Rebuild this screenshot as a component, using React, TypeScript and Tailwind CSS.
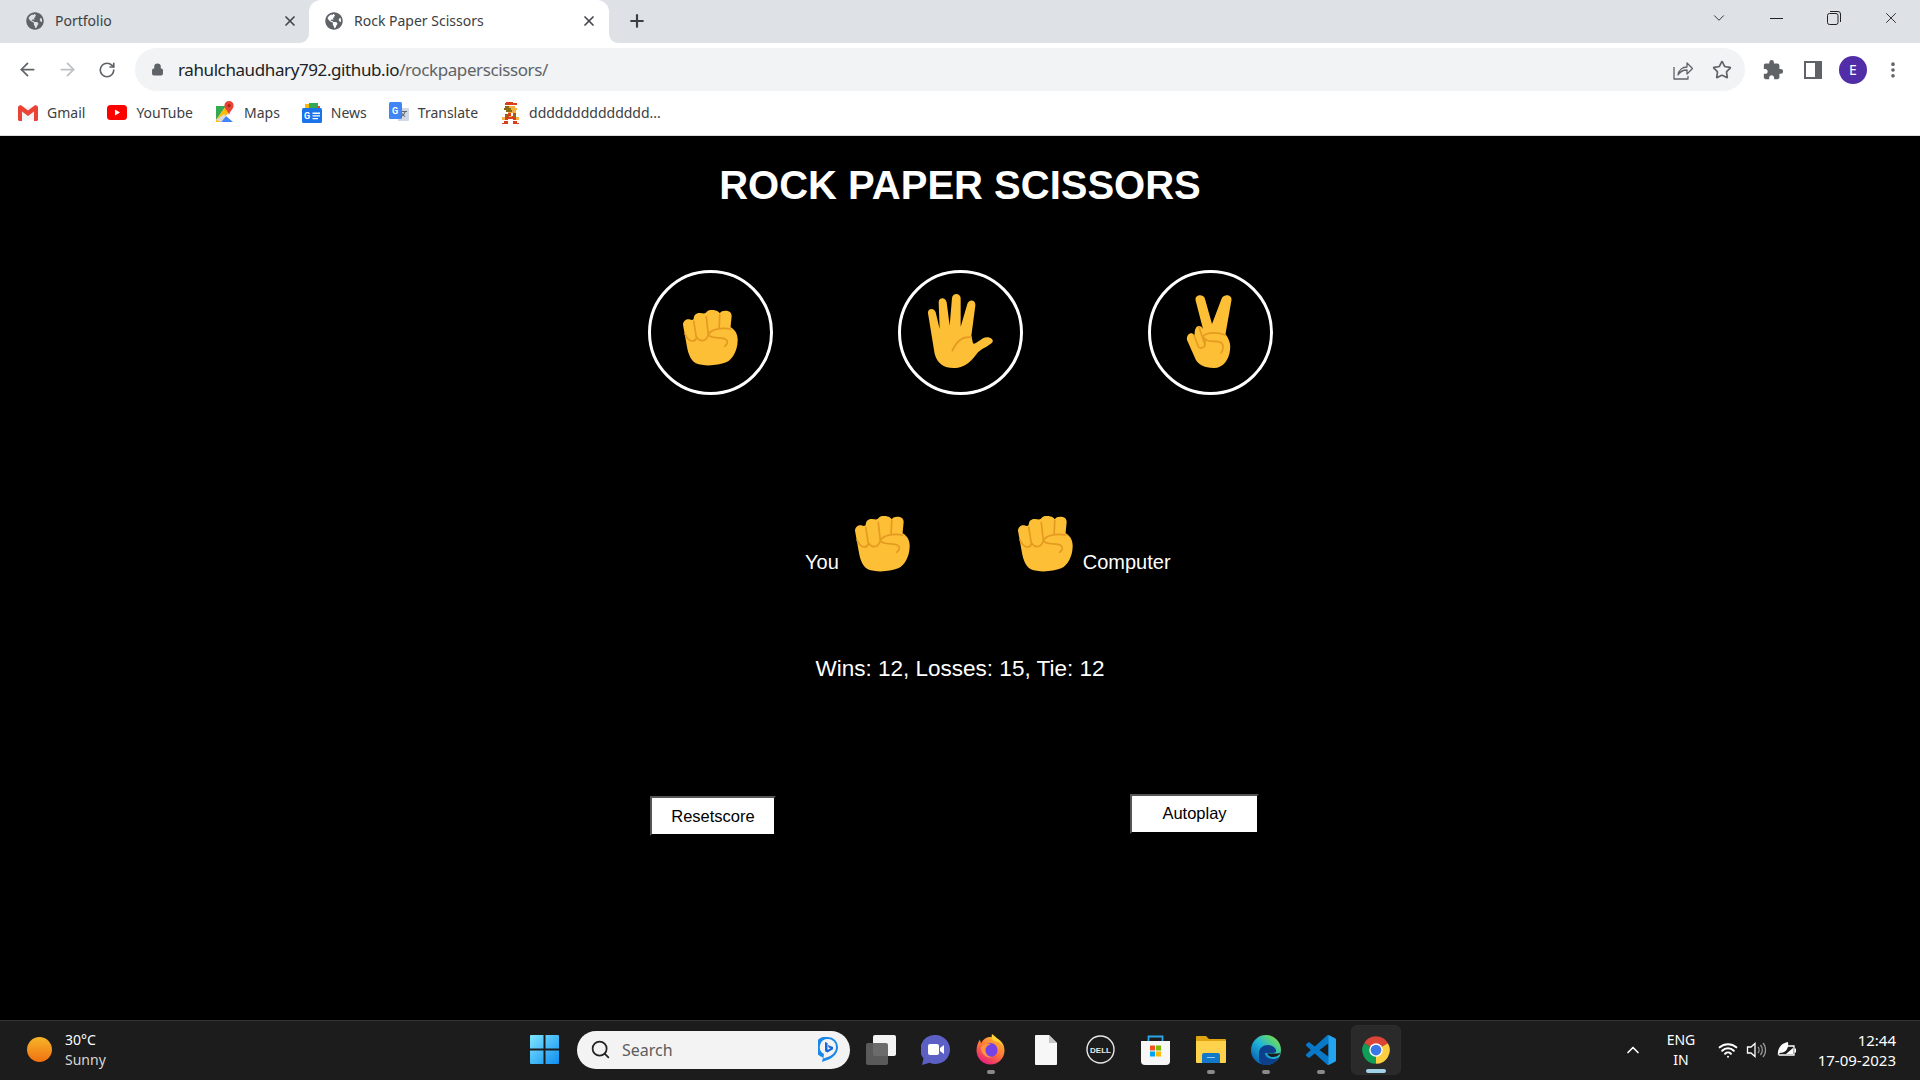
import type { ReactNode } from "react";
import { ArrowLeft, ArrowRight, ChevronDown, ChevronUp, Lock, MoreVertical, Plus, RotateCw, Search, Star, Wifi, X } from "lucide-react";
import { FaGlobeAmericas } from "react-icons/fa";
import { MdExtension } from "react-icons/md";

const skin = "#fdbf35";
const crease = "#e59a21";

const Fist = () => (
  <svg width="55" height="56" viewBox="197 48 163 168" preserveAspectRatio="none">
    <path
      fill={skin}
      d="M197 92C197 80 208 74 216 76C222 78 228 80 229 72C230 60 240 56 248 57C256 58 264 60 266 55C270 48 280 47 288 48C296 49 302 52 306 58C310 50 320 49 330 51C338 53 342 60 341 68L338 100C350 106 360 120 359 140C358 170 345 195 325 205C300 215 260 218 235 208C220 200 213 180 209 160Z"
    />
    <path
      fill="none"
      stroke={crease}
      strokeWidth="5"
      strokeLinecap="round"
      d="M229 82L236 128M266 68L272 122M306 62L304 102M203 120C214 146 232 146 238 130C248 146 266 142 272 122C280 105 310 100 338 105M272 122C282 136 310 128 322 135C332 141 330 150 320 157"
    />
  </svg>
);

const Paper = () => (
  <svg width="65" height="74" viewBox="120 70 195 222">
    <path
      fill={skin}
      d="M120 128C118 112 138 110 143 125L155 175L152 95C152 80 172 78 176 95L185 165L192 82C194 66 216 66 218 82L218 168L238 100C242 85 264 85 262 105L250 195L255 218C262 222 270 212 285 203C300 194 320 205 313 215C305 225 285 232 270 245C250 270 240 285 210 291C175 295 150 285 140 250Z"
    />
    <path fill="none" stroke={crease} strokeWidth="5" strokeLinecap="round" d="M193 240C205 212 225 197 250 200" />
  </svg>
);

const Scissors = () => (
  <svg width="46" height="74" viewBox="0 0 46 74">
    <path
      fill={skin}
      d="M9.5 6C9 0 18 0 19 5L26 30L35.5 5C37 0 46 0 45.5 6L39.5 40C43 45 45 50 44 56C43 66 37 74 28 74C18 74 11 70 9 64L1 46C0 40 6 37 8 41L9 44C8 38 9 32 13 32C15 32 16 33 17 35Z"
    />
    <path
      fill="none"
      stroke={crease}
      strokeWidth="1.6"
      strokeLinecap="round"
      d="M8 41L12 52C13 55 17 55 19 51M13 33L19 51C20 47 18 44 17 42C22 38 32 38 39 41M17 42C20 50 30 46 34 48C38 50 38 55 35 59"
    />
  </svg>
);

const Gmail = () => (
  <svg width="20" height="16" viewBox="0 0 20 16">
    <path fill="#f3f3f3" d="M1 2h18v13H1z" />
    <path fill="#ea4335" d="M0 2.500C0 .5 2 -.5 3.500.6L10 5.600 16.500.6C18-.5 20 .5 20 2.500V14.600C20 15.400 19.400 16 18.600 16H16V6.600L10 11 4 6.600V16H1.400C.6 16 0 15.400 0 14.600z" />
  </svg>
);

const YouTube = () => (
  <svg width="20" height="15" viewBox="0 0 20 15">
    <rect width="20" height="15" rx="3.500" fill="#f00" />
    <path fill="#fff" d="M8 4.400v6.200l5-3.100z" />
  </svg>
);

const Maps = () => (
  <svg width="20" height="24" viewBox="0 0 20 24">
    <path fill="#34a853" d="M1 5h10L1 19z" />
    <path fill="#fbbc04" d="M1 19L11 5l3 6-8 10H1z" />
    <path fill="#4285f4" d="M6 21l5-6 7 6z" />
    <path fill="#d9d9d9" d="M1 19l5 2 5-6-2-2z" />
    <path fill="#ea4335" d="M14 0a4.600 4.600 0 0 1 4.600 4.600C18.600 8 15 10 14 14 13 10 9.400 8 9.400 4.600A4.600 4.600 0 0 1 14 0z" />
    <circle cx="14" cy="4.600" r="1.600" fill="#a52714" />
  </svg>
);

const News = () => (
  <svg width="20" height="20" viewBox="0 0 20 20">
    <path fill="#fbbc04" d="M3 1h9v5H3z" />
    <path fill="#34a853" d="M7 0h9v6H7z" />
    <path fill="#ea4335" d="M15 3h3v3h-3z" />
    <rect y="5" width="20" height="15" rx="1.500" fill="#1a73e8" />
    <text x="2" y="16" fontSize="9" fontWeight="700" fill="#fff" fontFamily="Roboto, sans-serif">G</text>
    <path fill="#fff" d="M10.500 9.500H18v1.400h-7.500zM10.500 12.200H18v1.400h-7.500zM10.500 14.900H16v1.400h-5.500z" />
  </svg>
);

const Translate = () => (
  <svg width="20" height="22" viewBox="0 0 20 22">
    <path fill="#cfd8e3" d="M8 6h11a1 1 0 0 1 1 1v11a1 1 0 0 1-1 1H9z" />
    <rect width="13" height="17" rx="1.500" fill="#4285f4" />
    <text x="3" y="12" fontSize="9" fontWeight="700" fill="#fff" fontFamily="Roboto, sans-serif">G</text>
    <path fill="#5f6368" d="M13 9h5v1h-1.500c-.3 1.200-1 2.300-1.700 3l1.500 1.200-.5.8-1.700-1.400-2 1.600-.6-.8 2-1.500-1-1.700h1c.2.4.4.8.7 1.100.5-.6.9-1.400 1.200-2.300H13z" />
  </svg>
);

const Mario = () => (
  <svg width="17" height="22" viewBox="0 0 12 16" shapeRendering="crispEdges">
    <path fill="#d8401c" d="M3 0h5v1h3v1H2V1h1zM4 8h2v2h2V8h2v3h2v2H8v-1H4v1H0v-2h2V9h2zM1 14h3v2H0v-1h1zM8 14h3v1h1v1H8z" />
    <path fill="#8a6a12" d="M2 3h3v1h1v2h1v1H3V6H1V4h1zM2 9h2v2H2zM8 9h2v2H8z" />
    <path fill="#f4b040" d="M5 3h4v1h2v2h-1v2H4V7h3V6H6V4H5zM0 11h2v2H0zM10 11h2v2h-2zM5 10h2v1H5z" />
  </svg>
);

const ShareIcon = () => (
  <svg width="20" height="20" viewBox="0 0 20 20" fill="none" stroke="#5f6368" strokeWidth="1.300" strokeLinejoin="round">
    <path d="M1 7v12h14v-3" />
    <path d="M5 15c.6-5 4.500-8 9-8V3l5.500 5.500L14 14v-4c-4 0-7 1.500-9 5z" />
  </svg>
);

const WinLogo = () => (
  <svg width="29" height="29" viewBox="0 0 29 29">
    <defs>
      <linearGradient id="win" x1="0" y1="0" x2="1" y2="1">
        <stop offset="0" stopColor="#7fe6ff" />
        <stop offset="1" stopColor="#0f8ef0" />
      </linearGradient>
    </defs>
    <path fill="url(#win)" d="M1 0h12.500v13.500H0V1a1 1 0 0 1 1-1zM15.500 0H28a1 1 0 0 1 1 1v12.500H15.500zM0 15.500h13.500V29H1a1 1 0 0 1-1-1zM15.500 15.500H29V28a1 1 0 0 1-1 1H15.500z" />
  </svg>
);

const Bing = () => (
  <svg width="20" height="25" viewBox="0 0 20 25">
    <path fill="#1a88e8" d="M10 0a10 10 0 0 1 10 10c0 5-3 9-8 12l-8 3 1-4.600A10 10 0 0 1 10 0zm0 2a8 8 0 0 0-4 15l-.6 4.600L11 19.600C15.500 17.500 18 14 18 10a8 8 0 0 0-8-8z" />
    <path fill="#1668d8" d="M7 5l2.500 1v7l3-1.700-1.800-.9-.9-2.400 5.200 2v2.300l-5.600 3.300-2.400-1.300z" />
  </svg>
);

const TaskView = () => (
  <svg width="30" height="30" viewBox="0 0 30 30">
    <rect x="7" y="0" width="23" height="21" rx="2" fill="#f3f3f3" />
    <rect x="0" y="8" width="22" height="22" rx="2" fill="#5f5f5f" fillOpacity=".92" />
  </svg>
);

const Chat = () => (
  <svg width="29" height="30" viewBox="0 0 29 30">
    <path fill="#5c5fc4" d="M14.500 0a14.500 14.500 0 1 1-6 27.700L1 30l1.500-6.500A14.500 14.500 0 0 1 14.500 0z" />
    <rect x="7" y="9" width="11" height="11" rx="2" fill="#fff" />
    <path fill="#fff" d="M19 13l4-3v9l-4-3z" />
  </svg>
);

const Firefox = () => (
  <svg width="29" height="31" viewBox="0 0 29 31">
    <defs>
      <linearGradient id="ff" x1="0.8" y1="0" x2="0.2" y2="1">
        <stop offset="0" stopColor="#ffbd2e" />
        <stop offset="0.5" stopColor="#ff7139" />
        <stop offset="1" stopColor="#e31587" />
      </linearGradient>
    </defs>
    <path fill="url(#ff)" d="M14.500 3c8 0 14 5.500 14 13.500a14 14 0 1 1-28 0C.5 12 2 8 4 5.500l1 4c2-4 5-6.500 9.500-6.500z" />
    <path fill="#ffd43a" d="M16 0c4 3 9 7 12 13-2-3-6-6-10-6-2-2-3-4-2-7z" />
    <circle cx="14.500" cy="16" r="7" fill="#7542e5" />
    <path fill="#ff9640" d="M5 13c3-3 7-4 10-3-3 1-6 3-5.500 7 .3 3 3 6 7 6-5 2-12-3-11.500-10z" />
  </svg>
);

const Doc = () => (
  <svg width="22" height="30" viewBox="0 0 22 30">
    <path fill="#f7f7f7" d="M0 1a1 1 0 0 1 1-1h13l8 8v21a1 1 0 0 1-1 1H1a1 1 0 0 1-1-1z" />
    <path fill="#c4c4c4" d="M14 0l8 8h-8z" />
  </svg>
);

const Dell = () => (
  <svg width="29" height="29" viewBox="0 0 29 29">
    <circle cx="14.500" cy="14.500" r="13.500" fill="none" stroke="#e8e8e8" strokeWidth="1.400" />
    <text x="14.500" y="17.500" textAnchor="middle" fontSize="8" fontWeight="700" fill="#e8e8e8" fontFamily="Liberation Sans, sans-serif">DELL</text>
  </svg>
);

const Store = () => (
  <svg width="29" height="30" viewBox="0 0 29 30">
    <path fill="none" stroke="#2aa6e8" strokeWidth="1.800" d="M7.500 6V1.500h14V6" />
    <path fill="#f7f7f7" d="M0 6h29v20a4 4 0 0 1-4 4H4a4 4 0 0 1-4-4z" />
    <path fill="#f25022" d="M9 10.500h5v5H9z" />
    <path fill="#7fba00" d="M15 10.500h5v5h-5z" />
    <path fill="#00a4ef" d="M9 16.500h5v5H9z" />
    <path fill="#ffb900" d="M15 16.500h5v5h-5z" />
  </svg>
);

const Folder = () => (
  <svg width="30" height="27" viewBox="0 0 30 27">
    <path fill="#e0a312" d="M0 1a1 1 0 0 1 1-1h9l3 3h16a1 1 0 0 1 1 1v6H0z" />
    <path fill="#ffd24c" d="M0 5h30v21a1 1 0 0 1-1 1H1a1 1 0 0 1-1-1z" />
    <path fill="#1478c8" d="M6 19a2 2 0 0 1 2-2h14a2 2 0 0 1 2 2v8H6z" />
    <path fill="#8fd0f5" d="M11 21h8v1h-8z" />
  </svg>
);

const Edge = () => (
  <svg width="30" height="30" viewBox="0 0 30 30">
    <defs>
      <linearGradient id="edge" x1="0.1" y1="0.9" x2="0.8" y2="0.1">
        <stop offset="0" stopColor="#0a5fb0" />
        <stop offset="0.55" stopColor="#1fb4d8" />
        <stop offset="1" stopColor="#6fdc5c" />
      </linearGradient>
    </defs>
    <circle cx="15" cy="15" r="15" fill="url(#edge)" />
    <path fill="#0c3f8c" d="M8 18c0-5 4-8 9-8 4 0 7 2 8 5 .5 2-1 3-3 3H14c0 3 3 6 8 6 2 0 4-.5 6-2-2.500 5-7 8-13 8-4 0-7-2-7-6z" />
    <path fill="#1c1c1c" d="M29.500 17c-.5 1-2 1.500-4 1.500H16c1 2 3 3.500 6 3.500 2.500 0 4.500-.8 6.500-2.500z" />
  </svg>
);

const VSCode = () => (
  <svg width="30" height="30" viewBox="0 0 24 24">
    <path
      fill="#0a78c8"
      d="M23.150 2.587L18.210.21a1.494 1.494 0 0 0-1.705.29l-9.460 8.630-4.120-3.128a.999.999 0 0 0-1.276.057L.327 7.261A1 1 0 0 0 .326 8.740L3.899 12 .326 15.260a1 1 0 0 0 .001 1.479L1.650 17.940a.999.999 0 0 0 1.276.057l4.120-3.128 9.460 8.630a1.492 1.492 0 0 0 1.704.29l4.942-2.377A1.500 1.500 0 0 0 24 20.060V3.939a1.500 1.500 0 0 0-.850-1.352zm-5.146 14.861L10.826 12l7.178-5.448v10.896z"
    />
    <path fill="#22a5ee" d="M18.004 0L23.150 2.587A1.500 1.500 0 0 1 24 3.939V20.060a1.500 1.500 0 0 1-.850 1.352L18.004 24z" />
  </svg>
);

const Chrome = () => (
  <svg width="30" height="30" viewBox="0 0 24 24">
    <path fill="#db4437" d="M12 12L2.470 6.500A11 11 0 0 1 21.530 6.500z" />
    <path fill="#0f9d58" d="M12 12L12 23A11 11 0 0 1 2.470 6.500z" />
    <path fill="#ffcd40" d="M12 12L21.530 6.500A11 11 0 0 1 12 23z" />
    <circle cx="12" cy="12" r="5.400" fill="#fff" />
    <circle cx="12" cy="12" r="4.300" fill="#3b78e7" />
  </svg>
);

const Speaker = () => (
  <svg width="20" height="20" viewBox="0 0 20 20" fill="none" strokeWidth="1.300">
    <path stroke="#fff" d="M1.500 7v6H5l4 3.500v-13L5 7z" />
    <path stroke="#9a9a9a" d="M12 7c1.400 1.600 1.400 4.400 0 6M14.500 5c2.400 2.800 2.400 7.200 0 10M17 3c3.400 4 3.400 10 0 14" />
  </svg>
);

const Battery = () => (
  <svg width="20" height="20" viewBox="0 0 20 20">
    <path fill="none" stroke="#fff" strokeWidth="1.300" d="M6 6h11v9H2" />
    <path fill="#fff" d="M17.500 8.500H19v4h-1.500zM1 16C0 9 4 3 11 2c1 6-2 11-8 11l5-6-6 7z" />
    <path fill="#fff" d="M9 14h7V8z" />
  </svg>
);

const bookmarks: [ReactNode, string][] = [
  [<Gmail />, "Gmail"],
  [<YouTube />, "YouTube"],
  [<Maps />, "Maps"],
  [<News />, "News"],
  [<Translate />, "Translate"],
  [<Mario />, "dddddddddddddd..."],
];

const taskIcons: { icon: ReactNode; running?: boolean }[] = [
  { icon: <TaskView /> },
  { icon: <Chat /> },
  { icon: <Firefox />, running: true },
  { icon: <Doc /> },
  { icon: <Dell /> },
  { icon: <Store /> },
  { icon: <Folder />, running: true },
  { icon: <Edge />, running: true },
  { icon: <VSCode />, running: true },
];

const Flare = ({ side }: { side: "left" | "right" }) => (
  <svg
    width="10"
    height="10"
    viewBox="0 0 10 10"
    className={side === "left" ? "absolute bottom-0 -left-[10px]" : "absolute bottom-0 -right-[10px]"}
  >
    <path fill="#fff" d={side === "left" ? "M10 0v10H0C6 10 10 6 10 0z" : "M0 0v10h10C4 10 0 6 0 0z"} />
  </svg>
);

const Tab = ({ title, active }: { title: string; active?: boolean }) => (
  <div className={active ? "relative flex h-full w-[300px] items-center rounded-t-xl bg-white pb-[2px] pl-[16px] pr-[12px]" : "flex h-full w-[309px] items-center pb-[2px] pl-[26px] pr-[11px]"}>
    {active && <Flare side="left" />}
    {active && <Flare side="right" />}
    <FaGlobeAmericas size={18} color="#5f6368" />
    <span className="ml-[11px] text-[14px] text-[#3c4043]">{title}</span>
    <X size={16} strokeWidth={2.6} color="#45484c" className="ml-auto" />
  </div>
);

const Circle = ({ children }: { children: ReactNode }) => (
  <div className="flex h-[125px] w-[125px] items-center justify-center rounded-full border-[3px] border-white">{children}</div>
);

const Browser = () => (
  <div className="font-['Noto_Sans',sans-serif]">
    <div className="flex h-[43px] bg-[#dee1e6]">
      <Tab title="Portfolio" />
      <Tab title="Rock Paper Scissors" active />
      <div className="ml-[18px] flex items-center pb-[2px]">
        <Plus size={20} strokeWidth={2.6} color="#3c4043" />
      </div>
      <div className="ml-auto flex h-[36px] items-center pr-[1px] text-[#222]">
        <div className="flex w-[60px] justify-center pl-[1px]">
          <ChevronDown size={18} strokeWidth={1.2} />
        </div>
        <div className="flex w-[57px] justify-center">
          <div className="h-px w-[13px] bg-[#222]" />
        </div>
        <div className="flex w-[57px] justify-center">
          <svg width="14" height="14" viewBox="0 0 14 14" fill="none" stroke="#222">
            <rect x="0.5" y="2.500" width="10.500" height="11" rx="2" />
            <path d="M3 .5h8a2.500 2.500 0 0 1 2.500 2.500v8" />
          </svg>
        </div>
        <div className="flex w-[57px] justify-center">
          <X size={18} strokeWidth={1.2} />
        </div>
      </div>
    </div>

    <div className="flex h-[49px] bg-white pt-[5px]">
      <div className="ml-[7px] flex h-[43px] items-center">
        <div className="flex w-[40px] justify-center"><ArrowLeft size={21} strokeWidth={2} color="#5f6368" /></div>
        <div className="flex w-[40px] justify-center"><ArrowRight size={21} strokeWidth={2} color="#bcbfc3" /></div>
        <div className="flex w-[40px] justify-center"><RotateCw size={18} strokeWidth={2.2} color="#5f6368" /></div>
      </div>
      <div className="ml-[8px] flex h-[43px] w-[1610px] items-center rounded-full bg-[#f1f3f4] pl-[16px] pr-[13px]">
        <Lock size={13} color="#5f6368" fill="#5f6368" strokeWidth={2} />
        <div className="ml-[14px] text-[17px] tracking-[-0.4px] text-[#202124]">
          rahulchaudhary792.github.io<span className="text-[#5f6368]">/rockpaperscissors/</span>
        </div>
        <div className="ml-auto flex items-center gap-[19px]">
          <ShareIcon />
          <Star size={20} strokeWidth={2} color="#5f6368" />
        </div>
      </div>
      <div className="ml-[8px] flex h-[43px] items-center">
        <div className="flex w-[40px] justify-center"><MdExtension size={22} color="#5f6368" /></div>
        <div className="flex w-[40px] justify-center">
          <div className="h-[18px] w-[18px] bg-[#5f6368] p-[2px]">
            <div className="h-full w-[9px] bg-white" />
          </div>
        </div>
        <div className="flex w-[40px] justify-center">
          <div className="flex h-[28px] w-[28px] items-center justify-center rounded-full bg-[#512da8] text-[14px] text-white">E</div>
        </div>
        <div className="flex w-[40px] justify-center"><MoreVertical size={20} strokeWidth={2.4} color="#5f6368" /></div>
      </div>
    </div>

    <div className="flex h-[44px] items-center gap-[22px] border-b border-[#dadce0] bg-white pb-[2px] pl-[18px]">
      {bookmarks.map(([icon, label]) => (
        <div key={label} className="flex items-center gap-[9px]">
          <div className="flex w-[20px] justify-center">{icon}</div>
          <span className="text-[14px] text-[#3c4043]">{label}</span>
        </div>
      ))}
    </div>
  </div>
);

const Game = () => (
  <main className="flex min-h-0 flex-1 flex-col bg-black font-['Liberation_Sans',sans-serif] text-white">
    <h1 className="mt-[23px] text-center text-[40px] font-bold leading-[52px]">ROCK PAPER SCISSORS</h1>
    <div className="mt-[59px] flex justify-center gap-[125px]">
      <Circle><div className="pt-[10px]"><Fist /></div></Circle>
      <Circle><div className="pb-[4px]"><Paper /></div></Circle>
      <Circle><div className="pb-[4px] pr-[2px]"><Scissors /></div></Circle>
    </div>
    <div className="mt-[121px] flex h-[56px] items-end pl-[805px] text-[20px] leading-[20px]">
      <span>You</span>
      <div className="ml-[16px]"><Fist /></div>
      <div className="ml-[108px]"><Fist /></div>
      <span className="ml-[10px]">Computer</span>
    </div>
    <p className="mt-[83px] text-center text-[22.5px] leading-[28px]">Wins: 12, Losses: 15, Tie: 12</p>
    <div className="mt-[111px] flex items-start pl-[650px]">
      <button className="mt-[2px] h-[40px] w-[126px] border-2 border-b-black border-l-[#555] border-r-black border-t-[#555] bg-white text-[16.5px] text-black">Resetscore</button>
      <button className="ml-[354px] h-[40px] w-[129px] border-2 border-b-black border-l-[#555] border-r-black border-t-[#555] bg-white pb-[2px] text-[16.5px] text-black">Autoplay</button>
    </div>
  </main>
);

const Taskbar = () => (
  <footer className="flex h-[60px] items-center border-t border-[#333] bg-[#1c1c1c] pb-[2px] font-['Noto_Sans',sans-serif] text-[14px] leading-[20px] text-white">
    <div className="flex w-[519px] items-center pl-[27px]">
      <div className="h-[25px] w-[25px] rounded-full bg-gradient-to-b from-[#f5b429] to-[#f0700f]" />
      <div className="ml-[13px]">
        <div>30°C</div>
        <div className="text-[#d6d6d6]">Sunny</div>
      </div>
    </div>
    <div className="flex w-[50px] justify-center"><WinLogo /></div>
    <div className="ml-[8px] flex h-[38px] w-[273px] items-center rounded-full bg-[#f3f3f3] pl-[13px] pr-[12px] text-[16px] text-[#5c5c5c]">
      <Search size={21} strokeWidth={2} color="#222" />
      <span className="ml-[11px]">Search</span>
      <div className="ml-auto"><Bing /></div>
    </div>
    <div className="ml-[3px] flex">
      {taskIcons.map((t, i) => (
        <div key={i} className="relative flex h-[50px] w-[55px] items-center justify-center">
          {t.icon}
          {t.running && <div className="absolute bottom-[1px] h-[4px] w-[8px] rounded-full bg-[#8a8a8a]" />}
        </div>
      ))}
    </div>
    <div className="relative ml-[3px] flex h-[50px] w-[50px] items-center justify-center rounded-md border border-[#2c2c2c] bg-[#2a2a2a]">
      <Chrome />
      <div className="absolute bottom-[1px] h-[4px] w-[20px] rounded-full bg-[#a2d2e8]" />
    </div>
    <div className="ml-[222px] flex w-[20px] justify-center"><ChevronUp size={20} strokeWidth={2} /></div>
    <div className="ml-[20px] w-[36px] text-center">
      <div>ENG</div>
      <div>IN</div>
    </div>
    <div className="ml-[18px] flex w-[22px] justify-center"><Wifi size={20} strokeWidth={2.4} /></div>
    <div className="ml-[7px] flex w-[20px] justify-center"><Speaker /></div>
    <div className="ml-[11px] flex w-[20px] justify-center"><Battery /></div>
    <div className="ml-auto pr-[24px] text-right text-[15px]">
      <div>12:44</div>
      <div>17-09-2023</div>
    </div>
  </footer>
);

export default function App() {
  return (
    <div className="flex h-[1080px] w-[1920px] flex-col overflow-hidden">
      <Browser />
      <Game />
      <Taskbar />
    </div>
  );
}
